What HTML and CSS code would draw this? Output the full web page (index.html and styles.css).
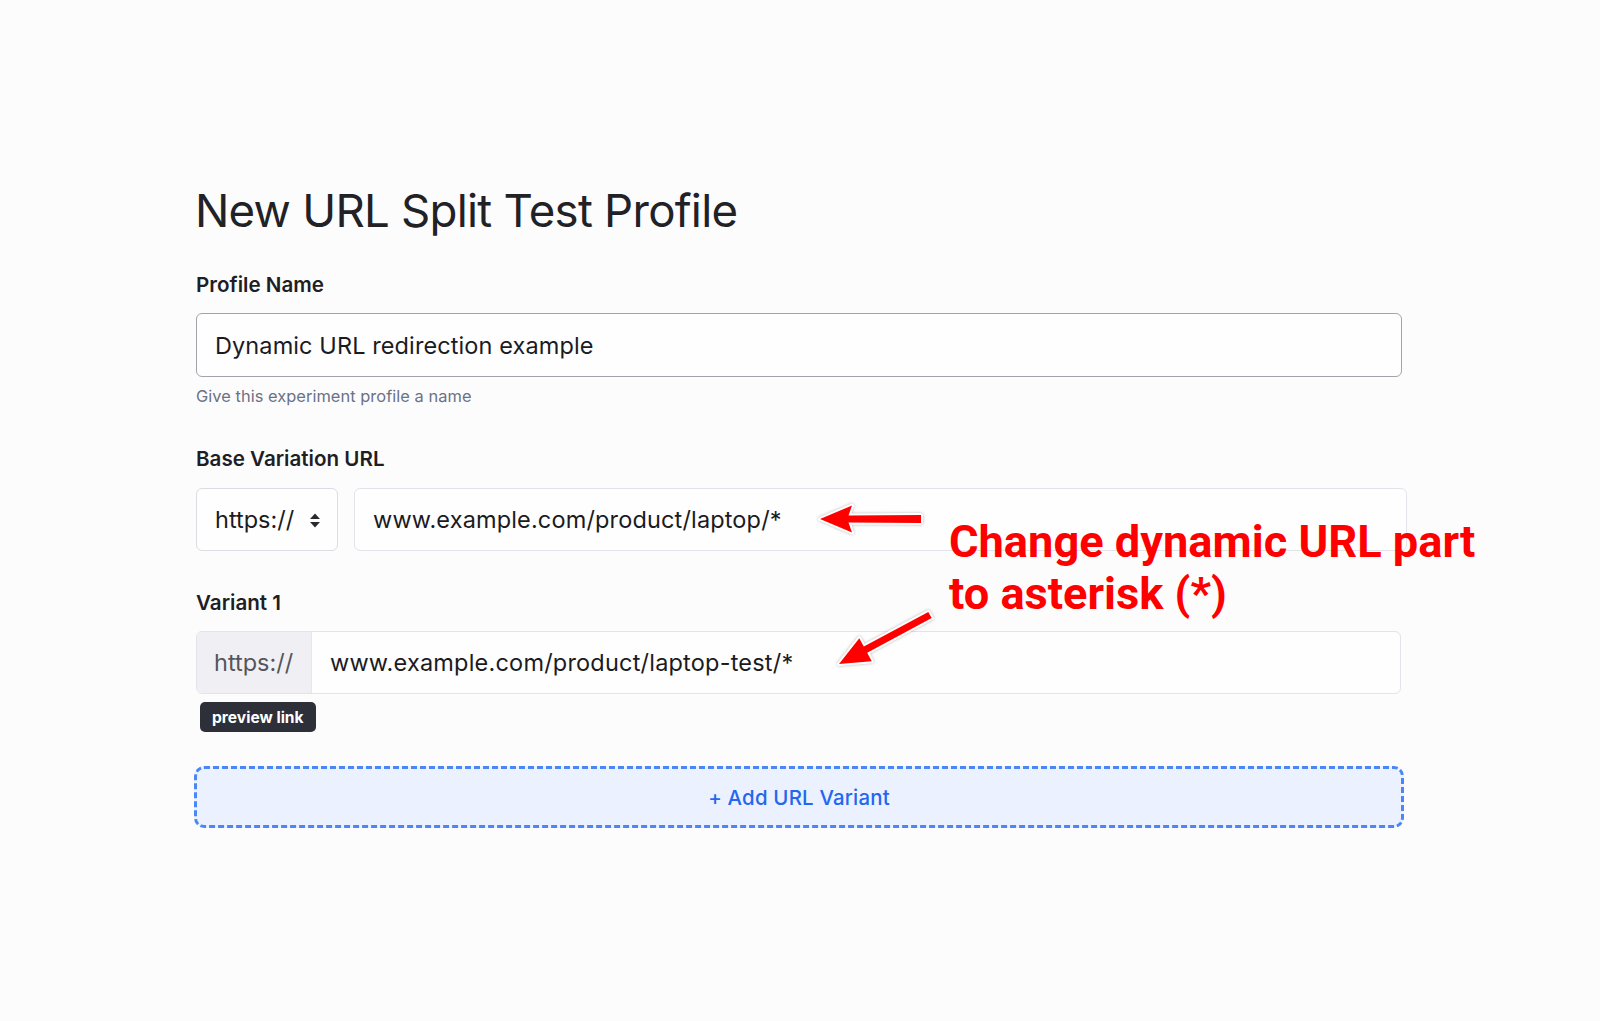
FILE: index.html
```html
<!DOCTYPE html>
<html lang="en">
<head>
<meta charset="utf-8">
<title>New URL Split Test Profile</title>
<link rel="stylesheet" href="styles.css">
</head>
<body>
<main class="page">
  <h1 class="title">New URL Split Test Profile</h1>

  <section class="field">
    <label class="label">Profile Name</label>
    <div class="input input--strong">Dynamic URL redirection example</div>
    <p class="help">Give this experiment profile a name</p>
  </section>

  <section class="field field--base">
    <label class="label">Base Variation URL</label>
    <div class="url-row">
      <div class="select">
        <span>https://</span>
        <svg class="select-caret" width="12" height="17" viewBox="0 0 12 17" aria-hidden="true">
          <path d="M6 1.5 L11 7 H1 Z" fill="#2a2a2e"/>
          <path d="M6 15.5 L11 10 H1 Z" fill="#2a2a2e"/>
        </svg>
      </div>
      <div class="input input--grow">www.example.com/product/laptop/*</div>
    </div>
  </section>

  <section class="field field--variant">
    <label class="label">Variant 1</label>
    <div class="group">
      <span class="group-prefix">https://</span>
      <span class="group-value">www.example.com/product/laptop-test/*</span>
    </div>
    <span class="badge">preview link</span>
  </section>

  <button class="add-variant" type="button">+ Add URL Variant</button>
</main>

<!-- annotation layer drawn over the form -->
<svg class="callouts" width="1600" height="1021" viewBox="0 0 1600 1021" aria-hidden="true">
  <polygon class="arrow" points="820,519 852,505.5 848.5,515.5 921,515 921,523 848.5,522.5 852,532.5"/>
  <polygon class="arrow" points="839,664 859.3,638.2 863.8,646.6 928.3,611.9 931.7,618.1 867.2,652.8 871.7,661.2"/>
</svg>
<p class="callout-text">Change dynamic URL part<br>to asterisk (*)</p>
</body>
</html>
```

FILE: styles.css
```css
* {
  box-sizing: border-box;
}

html, body {
  margin: 0;
  padding: 0;
  background: #fdfcfd;
}

body {
  font-family: Inter, "Noto Sans", "Liberation Sans", sans-serif;
  color: #1f2024;
  width: 1600px;
  height: 1021px;
  position: relative;
  overflow: hidden;
}

.page {
  width: 1206px;
  margin-left: 196px;
  padding-top: 183px;
  display: flex;
  flex-direction: column;
}

.title {
  margin: 0 0 34px -1px;
  font-size: 45.6px;
  line-height: 56px;
  font-weight: 400;
  letter-spacing: -0.75px;
  color: #222226;
}

.field {
  display: flex;
  flex-direction: column;
  align-items: flex-start;
}

.label {
  font-size: 20.6px;
  line-height: 24px;
  font-weight: 600;
  margin-bottom: 16px;
  color: #1e1f24;
}

.input {
  width: 100%;
  height: 64px;
  display: flex;
  align-items: center;
  padding: 0 18px;
  border: 1.5px solid #e3e3e9;
  border-radius: 6px;
  background: #fefefe;
  font-size: 23.5px;
  color: #1b1b1f;
  letter-spacing: 0.15px;
}

.input--strong {
  border-color: #a4a3a9;
  letter-spacing: 0.1px;
}

.help {
  margin: 9px 0 0;
  font-size: 16.4px;
  line-height: 20px;
  color: #6a7185;
  letter-spacing: 0.05px;
}

.field--base {
  margin-top: 41px;
}

.url-row {
  width: calc(100% + 5px);
  display: flex;
  gap: 16px;
  margin-top: 1px;
}

.select {
  flex: 0 0 142px;
  height: 63px;
  display: flex;
  align-items: center;
  justify-content: space-between;
  padding: 0 16px 0 18px;
  border: 1.5px solid #dcdce2;
  border-radius: 6px;
  background: #fefefe;
  font-size: 23.5px;
  color: #1b1b1f;
}

.select-caret {
  margin-top: 1px;
}

.input--grow {
  flex: 1 1 auto;
  height: 63px;
  padding-left: 18px;
}

.field--variant {
  margin-top: 40px;
}

.group {
  width: calc(100% - 1px);
  height: 63px;
  margin-top: 0;
  display: flex;
  align-items: stretch;
  border: 1.5px solid #e3e3e9;
  border-radius: 6px;
  overflow: hidden;
  background: #fefefe;
  font-size: 23.5px;
}

.group-prefix {
  flex: 0 0 115px;
  display: flex;
  align-items: center;
  padding-left: 17px;
  background: #f0f0f4;
  color: #55555c;
  border-right: 1px solid #e6e6ec;
}

.group-value {
  display: flex;
  align-items: center;
  padding-left: 18px;
  color: #1b1b1f;
  letter-spacing: 0.2px;
}

.badge {
  margin: 8px 0 0 4px;
  height: 30px;
  padding: 0 12px;
  display: inline-flex;
  align-items: center;
  border-radius: 5px;
  background: #2d3039;
  color: #ffffff;
  font-size: 15.6px;
  font-weight: 700;
}

.add-variant {
  margin: 34px 0 0 -2px;
  width: 1210px;
  height: 62px;
  border: 3px dashed #4b86f5;
  border-radius: 10px;
  background: #ebf1fe;
  color: #2467ee;
  font-family: inherit;
  font-size: 20.4px;
  font-weight: 450;
  letter-spacing: 0.2px;
  cursor: pointer;
}

.callouts {
  position: absolute;
  left: 0;
  top: 0;
  pointer-events: none;
  filter: drop-shadow(0 0 1.5px rgba(0, 0, 0, 0.28));
}

.arrow {
  fill: #ff0000;
  stroke: #ffffff;
  stroke-width: 4;
  stroke-linejoin: round;
  paint-order: stroke;
}

.callout-text {
  position: absolute;
  left: 949px;
  top: 516px;
  margin: 0;
  font-family: Roboto, "Liberation Sans", sans-serif;
  font-weight: 700;
  font-size: 45.2px;
  line-height: 52px;
  color: #ff0000;
  letter-spacing: 0;
}
```
